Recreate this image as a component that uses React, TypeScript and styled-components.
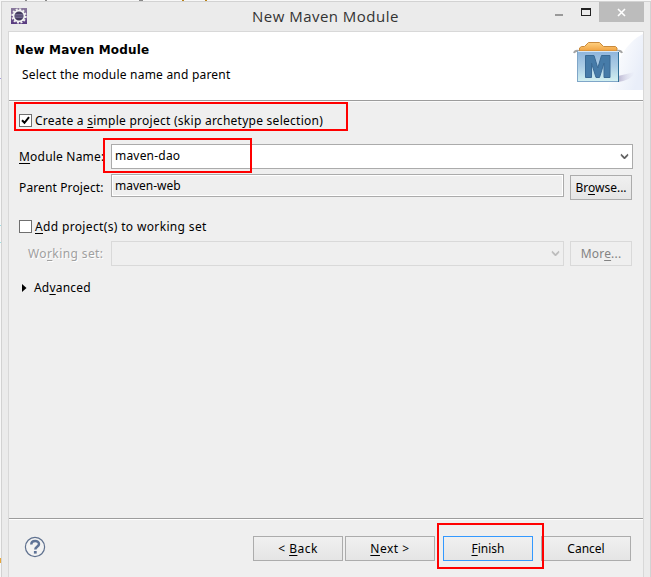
import React from "react";
import styled, { createGlobalStyle } from "styled-components";

const Global = createGlobalStyle`
  * { box-sizing: border-box; }
  html, body { margin: 0; padding: 0; overflow: hidden; }
  body { background: #f4f4f4; font-family: "Noto Sans", "Open Sans", sans-serif; font-size: 12px; color: #000; }
  u { text-decoration: underline; text-underline-offset: 2px; text-decoration-thickness: 1px; text-decoration-skip-ink: none; }
`;

const Desktop = styled.div`
  position: relative;
  width: 651px;
  height: 577px;
  padding: 1px 0 0 1px;
  background:
    linear-gradient(#8a8a8a, #8a8a8a) 25px 0 / 2px 1px no-repeat,
    linear-gradient(#8a8a8a, #8a8a8a) 45px 0 / 2px 1px no-repeat,
    linear-gradient(#8a8a8a, #8a8a8a) 139px 0 / 4px 1px no-repeat,
    linear-gradient(#b98218, #b98218) 182px 0 / 2px 1px no-repeat,
    linear-gradient(#b98218, #b98218) 205px 0 / 2px 1px no-repeat,
    linear-gradient(#a79be0, #a79be0) 0 78px / 1px 1px no-repeat,
    linear-gradient(#9de0e4, #9de0e4) 0 225px / 1px 1px no-repeat,
    linear-gradient(#9de0e4, #9de0e4) 0 242px / 1px 1px no-repeat,
    linear-gradient(#e8a83a, #e8a83a) 0 558px / 1px 5px no-repeat,
    #f7f7f7;
`;

const Frame = styled.div`
  width: 650px;
  height: 576px;
  border: 1px solid #d2d2d2;
  border-bottom: 0;
  background: #ebebeb;
`;

const TitleBar = styled.header`
  display: grid;
  grid-template-columns: 80px 1fr 100px;
  height: 29px;
  padding: 0 6px 0 9px;
`;

const AppIcon = styled.svg`
  width: 16px;
  height: 16px;
  margin-top: 6px;
`;

const Title = styled.div`
  color: #333;
  font: 15px/28px "Open Sans", "Noto Sans", sans-serif;
  letter-spacing: 0.48px;
  padding-left: 161px;
  white-space: nowrap;
`;

const Controls = styled.div`
  display: flex;
  justify-content: flex-end;
  height: 20px;
`;

const ControlsSvg = styled.svg`
  width: 90px;
  height: 20px;
  flex: none;
`;

const Client = styled.main`
  width: 636px;
  height: 546px;
  margin-left: 6px;
  border: 1px solid #d8d8d8;
  border-bottom: 0;
  background: #efefef;
  display: flex;
  flex-direction: column;
`;

const Banner = styled.section`
  display: flex;
  justify-content: space-between;
  height: 69px;
  flex: none;
  background: #fff;
  border-bottom: 1px solid #9c9c9c;
`;

const BannerText = styled.div`
  padding: 9px 0 0 6px;
`;

const Heading = styled.h1`
  margin: 0;
  font: 700 12px/18px "DejaVu Sans", sans-serif;
  letter-spacing: 0.16px;
  white-space: nowrap;
`;

const Sub = styled.p<{ $ls?: number }>`
  margin: 7px 0 0 7px;
  line-height: 18px;
  letter-spacing: ${(p) => p.$ls ?? 0}px;
  white-space: nowrap;
`;

const BannerArt = styled.svg`
  width: 75px;
  height: 58px;
`;

const Form = styled.section`
  flex: 1;
  border-top: 1px solid #fafafa;
  padding: 10px 0 0 10px;
`;

const Row = styled.div<{ $h: number; $mt?: number; $indent?: number; $align?: "center" | "flex-start" | "flex-end" }>`
  display: flex;
  align-items: ${(p) => p.$align ?? "center"};
  height: ${(p) => p.$h}px;
  margin-top: ${(p) => p.$mt ?? 0}px;
  padding-left: ${(p) => p.$indent ?? 0}px;
`;

const Text = styled.span<{ $ls?: number; $disabled?: boolean }>`
  line-height: 18px;
  white-space: nowrap;
  letter-spacing: ${(p) => p.$ls ?? 0}px;
  color: ${(p) => (p.$disabled ? "#a0a0a0" : "#000")};
  text-shadow: ${(p) => (p.$disabled ? "1px 1px 0 #fff" : "none")};
`;

const Label = styled.div<{ $indent?: number; $drop?: number }>`
  width: 92px;
  flex: none;
  padding-left: ${(p) => p.$indent ?? 0}px;
  padding-top: ${(p) => p.$drop ?? 0}px;
  display: flex;
`;

const Check = styled.span`
  display: flex;
  width: 13px;
  height: 13px;
  margin: 0 3px 1px 0;
  border: 1px solid #6f6f6f;
  background: #fff;
`;

const Field = styled.div<{ $w: number; $h: number; $kind: "edit" | "readonly" | "disabled" }>`
  display: flex;
  align-items: center;
  justify-content: space-between;
  width: ${(p) => p.$w}px;
  height: ${(p) => p.$h}px;
  flex: none;
  padding: 0 3px ${(p) => (p.$kind === "readonly" ? 0 : 2)}px 3px;
  border: 1px solid ${(p) => (p.$kind === "disabled" ? "#d9d9d9" : "#ababab")};
  background: ${(p) => (p.$kind === "edit" ? "#fff" : "#efefef")};
  box-shadow: ${(p) => (p.$kind === "readonly" ? "inset 0 0 0 1px #fff" : "none")};
`;

const Chevron = styled.svg`
  width: 9px;
  height: 8px;
  margin-top: 3px;
`;

const Button = styled.button<{ $w: number; $tone?: "default" | "disabled"; $ls?: number }>`
  width: ${(p) => p.$w}px;
  height: 25px;
  flex: none;
  padding: 1px 0 0;
  font: 12px/18px "Noto Sans", "Open Sans", sans-serif;
  letter-spacing: ${(p) => p.$ls ?? 0}px;
  color: ${(p) => (p.$tone === "disabled" ? "#838383" : "#000")};
  border: 1px solid ${(p) => (p.$tone === "default" ? "#3399ff" : p.$tone === "disabled" ? "#d9d9d9" : "#acacac")};
  background: ${(p) => (p.$tone === "disabled" ? "#efefef" : "linear-gradient(#f0f0f0, #e5e5e5)")};
`;

const Spacer = styled.div<{ $w: number }>`
  width: ${(p) => p.$w}px;
  flex: none;
`;

const Footer = styled.footer`
  display: flex;
  height: 59px;
  flex: none;
  border-top: 1px solid #9c9c9c;
  box-shadow: inset 0 1px 0 #fff;
  padding: 17px 12px 0 15px;
`;

const Help = styled.svg`
  width: 22px;
  height: 22px;
  margin-right: auto;
`;

const Marker = styled.div<{ $x: number; $y: number; $w: number; $h: number }>`
  position: absolute;
  left: ${(p) => p.$x}px;
  top: ${(p) => p.$y}px;
  width: ${(p) => p.$w}px;
  height: ${(p) => p.$h}px;
  border: 2px solid #f00;
  pointer-events: none;
`;

function Down({ color }: { color: string }) {
  return (
    <Chevron viewBox="0 0 9 8">
      <path d="M1.3 1.2v1.5l3.2 3.3 3.2-3.3V1.2L4.5 4.2Z" fill={color} stroke={color} strokeWidth=".8" />
    </Chevron>
  );
}

export default function App() {
  return (
    <Desktop>
      <Global />
      <Frame>
        <TitleBar>
          <AppIcon viewBox="0 0 16 16">
            <defs>
              <linearGradient id="eclipse" x1="0" y1="0" x2="0" y2="1">
                <stop offset="0" stopColor="#8a7a9c" />
                <stop offset="1" stopColor="#57397f" />
              </linearGradient>
            </defs>
            <rect width="16" height="16" fill="url(#eclipse)" />
            <circle cx="8" cy="8" r="6.7" fill="none" stroke="#eee" strokeWidth="2" strokeDasharray="2 1.508" />
            <circle cx="8" cy="8" r="5.4" fill="#423a5c" stroke="#f4f4f4" strokeWidth="1.7" />
            <path d="M4.2 6.6h7.6M3.8 8h8.4M4.2 9.4h7.6" stroke="#8c82ac" strokeWidth=".7" />
          </AppIcon>
          <Title>New Maven Module</Title>
          <Controls>
            <ControlsSvg viewBox="0 0 90 20">
              <rect x="1" y="12" width="8" height="2" fill="#999" />
              <path d="M27 6h10v8H27zM28 8v5h8V8z" fill="#222" fillRule="evenodd" />
              <rect x="45" y="0" width="45" height="20" fill="#bcbcbc" />
              <path d="m64 7 7 7m0-7-7 7" stroke="#fff" strokeWidth="1.6" />
            </ControlsSvg>
          </Controls>
        </TitleBar>
        <Client>
          <Banner>
            <BannerText>
              <Heading>New Maven Module</Heading>
              <Sub $ls={0.21}>Select the module name and parent</Sub>
            </BannerText>
            <BannerArt viewBox="0 0 75 58">
              <defs>
                <linearGradient id="glow" x1="0" y1="0" x2="1" y2=".5">
                  <stop offset=".2" stopColor="#fff" />
                  <stop offset="1" stopColor="#e9eef9" />
                </linearGradient>
                <linearGradient id="box" x1="0" y1="0" x2="0" y2="1">
                  <stop offset="0" stopColor="#8fb5dc" />
                  <stop offset=".5" stopColor="#accde5" />
                  <stop offset="1" stopColor="#d3f1f1" />
                </linearGradient>
                <linearGradient id="folder" x1="0" y1="0" x2="0" y2="1">
                  <stop offset="0" stopColor="#ffd080" />
                  <stop offset="1" stopColor="#f0a240" />
                </linearGradient>
                <linearGradient id="shade" x1="0" y1="0" x2="1" y2="0">
                  <stop offset="0" stopColor="#b9b4d0" />
                  <stop offset="1" stopColor="#dcdff0" stopOpacity="0" />
                </linearGradient>
              </defs>
              <path d="M75 2C58 10 48 30 40 58h35Z" fill="url(#glow)" />
              <path d="M50 44 67 40Q64 48 50 50Z" fill="url(#shade)" />
              <path d="M11.5 19v-3l2-1.5h3l4-4h11l4 4h12l1.5 1.5v3Z" fill="url(#folder)" stroke="#c98a3c" strokeWidth="1" />
              <path d="M6 21q1-3 5-2M54 21q-1-3-5-2" fill="none" stroke="#a5a5a5" strokeWidth="2" />
              <rect x="9.5" y="19.5" width="41" height="30" fill="url(#box)" stroke="#7fa6c8" />
              <path d="M10 19.5h41" stroke="#d7e7f6" />
              <path d="M50.5 20v30" stroke="#2e6e96" />
              <path d="M17.5 45.500V23.500h8.500l3.800 12.500 3.700-12.500H42v22h-6V31l-4.500 14.500h-3.500L23.500 31v14.500Z" fill="#467ba8" stroke="#3a6a95" />
            </BannerArt>
          </Banner>
          <Form>
            <Row $h={18}>
              <Check>
                <svg width="11" height="11" viewBox="0 0 11 11">
                  <path d="m2 5.200 2.500 2.600L9 2.200" fill="none" stroke="#000" strokeWidth="2" />
                </svg>
              </Check>
              <Text $ls={0.26}>Create a <u>s</u>imple project (skip archetype selection)</Text>
            </Row>
            <Row $h={25} $mt={14}>
              <Label><Text $ls={0.2}><u>M</u>odule Name:</Text></Label>
              <Field $w={522} $h={25} $kind="edit"><Text $ls={0.2}>maven-dao</Text><Down color="#555" /></Field>
            </Row>
            <Row $h={26} $mt={5} $align="flex-end">
              <Row $h={26}>
                <Label $drop={2}><Text $ls={0.12}>Parent Project:</Text></Label>
              </Row>
              <Row $h={26} $align="flex-start">
                <Field $w={453} $h={23} $kind="readonly"><Text>maven-web</Text></Field>
              </Row>
              <Spacer $w={6} />
              <Button $w={62}>Br<u>o</u>wse...</Button>
            </Row>
            <Row $h={18} $mt={18}>
              <Check />
              <Text $ls={0.35}><u>A</u>dd project(s) to working set</Text>
            </Row>
            <Row $h={25} $mt={5}>
              <Label $indent={9}><Text $disabled $ls={0.4}>Wo<u>r</u>king set:</Text></Label>
              <Field $w={453} $h={25} $kind="disabled"><span /><Down color="#b9b9b9" /></Field>
              <Spacer $w={6} />
              <Button $w={62} $tone="disabled" $ls={0.2}>Mor<u>e</u>...</Button>
            </Row>
            <Row $h={18} $mt={13} $indent={3}>
              <svg width="12" height="10" viewBox="0 0 12 10"><path d="M0 1v8l4.500-4Z" /></svg>
              <Text $ls={0.2}>Ad<u>v</u>anced</Text>
            </Row>
          </Form>
          <Footer>
            <Help viewBox="0 0 22 22">
              <circle cx="11" cy="11" r="9.600" fill="#f3f3f3" stroke="#5f718f" strokeWidth="1.200" />
              <path d="M7.300 8.500C7.300 3.700 15 3.900 15 8c0 2.700-3.700 2.900-3.700 5.500" fill="none" stroke="#5f7396" strokeWidth="2.500" />
              <rect x="9.900" y="15" width="2.800" height="2.600" fill="#5f7396" />
            </Help>
            <Button $w={90} $ls={0.5}>&lt; <u>B</u>ack</Button>
            <Spacer $w={2} />
            <Button $w={90} $ls={0.5}><u>N</u>ext &gt;</Button>
            <Spacer $w={8} />
            <Button $w={90} $tone="default"><u>F</u>inish</Button>
            <Spacer $w={8} />
            <Button $w={90}>Cancel</Button>
          </Footer>
        </Client>
      </Frame>
      <Marker $x={14} $y={102} $w={334} $h={29} />
      <Marker $x={103} $y={138} $w={149} $h={35} />
      <Marker $x={437} $y={523} $w={107} $h={46} />
    </Desktop>
  );
}
